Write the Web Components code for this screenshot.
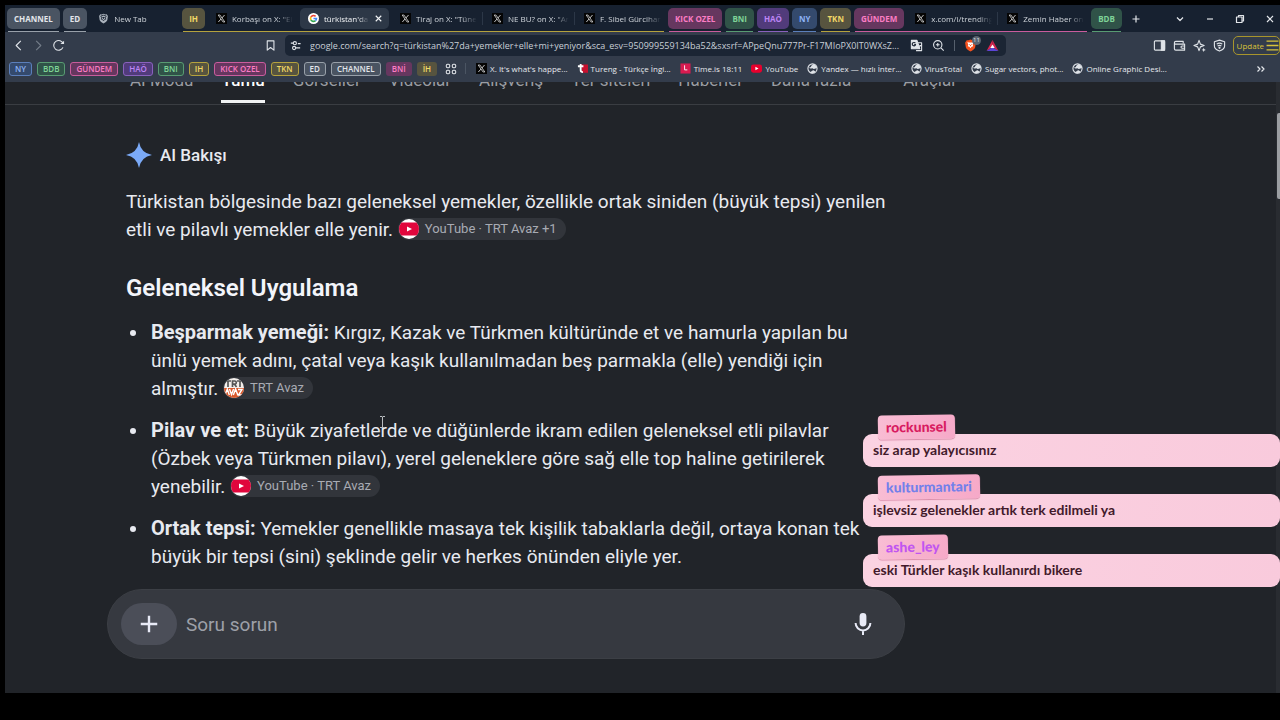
<!DOCTYPE html>
<html lang="tr">
<head>
<meta charset="utf-8">
<title>türkistan'da yemekler elle mi yeniyor</title>
<style>
  * { box-sizing: border-box; }
  body {
    margin: 0;
    padding: 5px 0 27px 5px;
    height: 100vh;
    background: #000;
    overflow: hidden;
    position: relative;
    font-family: "Open Sans", "Noto Sans", sans-serif;
    color: #e3e6ea;
  }
</style>
</head>
<body>
<browser-window>
  <tab-strip slot="tabs">
    <tab-group label="CHANNEL" color="grey"></tab-group>
    <tab-group label="ED" color="grey"></tab-group>
    <browser-tab icon="brave" label="New Tab"></browser-tab>
    <tab-group label="IH" color="yellow">
      <browser-tab icon="x" label='Korbaşı on X: "Eli'></browser-tab>
      <browser-tab icon="google" label="türkistan'da" active></browser-tab>
      <browser-tab icon="x" label='Tiraj on X: "Tünel' divider></browser-tab>
      <browser-tab icon="x" label='NE BU? on X: "Ar' divider></browser-tab>
      <browser-tab icon="x" label="F. Sibel Gürcihan"></browser-tab>
    </tab-group>
    <tab-group label="KICK OZEL" color="pink"></tab-group>
    <tab-group label="BNI" color="green"></tab-group>
    <tab-group label="HAÖ" color="purple"></tab-group>
    <tab-group label="NY" color="blue"></tab-group>
    <tab-group label="TKN" color="yellow"></tab-group>
    <tab-group label="GÜNDEM" color="pink">
      <browser-tab icon="x" label="x.com/i/trending" divider></browser-tab>
      <browser-tab icon="x" label="Zemin Haber on"></browser-tab>
    </tab-group>
    <tab-group label="BDB" color="green"></tab-group>
  </tab-strip>

  <address-bar slot="address" url="google.com/search?q=türkistan%27da+yemekler+elle+mi+yeniyor&amp;sca_esv=950999559134ba52&amp;sxsrf=APpeQnu777Pr-F17MIoPX0IT0WXsZ..."></address-bar>

  <bookmark-bar slot="bookmarks">
    <bookmark-chip color="blue">NY</bookmark-chip>
    <bookmark-chip color="green">BDB</bookmark-chip>
    <bookmark-chip color="pink">GÜNDEM</bookmark-chip>
    <bookmark-chip color="purple">HAÖ</bookmark-chip>
    <bookmark-chip color="green">BNI</bookmark-chip>
    <bookmark-chip color="yellow">IH</bookmark-chip>
    <bookmark-chip color="pink">KICK OZEL</bookmark-chip>
    <bookmark-chip color="yellow">TKN</bookmark-chip>
    <bookmark-chip color="grey">ED</bookmark-chip>
    <bookmark-chip color="grey">CHANNEL</bookmark-chip>
    <bookmark-chip color="pink" plain>BNİ</bookmark-chip>
    <bookmark-chip color="yellow" plain>İH</bookmark-chip>
    <bookmark-link slot="links" icon="x">X. It's what's happe...</bookmark-link>
    <bookmark-link slot="links" icon="tureng">Tureng - Türkçe İngi...</bookmark-link>
    <bookmark-link slot="links" icon="timeis">Time.is 18:11</bookmark-link>
    <bookmark-link slot="links" icon="youtube">YouTube</bookmark-link>
    <bookmark-link slot="links" icon="globe">Yandex — hızlı İnter...</bookmark-link>
    <bookmark-link slot="links" icon="globe">VirusTotal</bookmark-link>
    <bookmark-link slot="links" icon="globe">Sugar vectors, phot...</bookmark-link>
    <bookmark-link slot="links" icon="globe">Online Graphic Desi...</bookmark-link>
  </bookmark-bar>

  <search-page>
    <search-nav slot="nav"></search-nav>
    <ai-overview>
      <span slot="title">AI Bakışı</span>
      <p slot="summary">Türkistan bölgesinde bazı geleneksel yemekler, özellikle ortak siniden (büyük tepsi) yenilen<br>etli ve pilavlı yemekler elle yenir. <source-chip icon="ytround">YouTube · TRT Avaz +1</source-chip></p>
      <span slot="heading">Geleneksel Uygulama</span>
      <overview-item label="Beşparmak yemeği:">Kırgız, Kazak ve Türkmen kültüründe et ve hamurla yapılan bu<br>ünlü yemek adını, çatal veya kaşık kullanılmadan beş parmakla (elle) yendiği için<br>almıştır. <source-chip icon="trt">TRT Avaz</source-chip></overview-item>
      <overview-item label="Pilav ve et:">Büyük ziyafetlerde ve düğünlerde ikram edilen geleneksel etli pilavlar<br>(Özbek veya Türkmen pilavı), yerel geleneklere göre sağ elle top haline getirilerek<br>yenebilir. <source-chip icon="ytround">YouTube · TRT Avaz</source-chip></overview-item>
      <overview-item label="Ortak tepsi:">Yemekler genellikle masaya tek kişilik tabaklarla değil, ortaya konan tek<br>büyük bir tepsi (sini) şeklinde gelir ve herkes önünden eliyle yer.</overview-item>
    </ai-overview>
    <ask-bar placeholder="Soru sorun"></ask-bar>
  </search-page>
</browser-window>

<chat-overlay>
  <chat-message user="rockunsel" color="#d81b60">siz arap yalayıcısınız</chat-message>
  <chat-message user="kulturmantari" color="#7280ea">işlevsiz gelenekler artık terk edilmeli ya</chat-message>
  <chat-message user="ashe_ley" color="#c155f0">eski Türkler kaşık kullanırdı bikere</chat-message>
</chat-overlay>
<text-cursor></text-cursor>

<script>
"use strict";

(() => {
  // [viewBox, markup]; line icons take their stroke from currentColor
  const ICONS = {
    x: ["0 0 12 12", `<rect width="12" height="12" fill="#050505"/><path d="M2.4 2.2h1.9l5.3 7.6H7.7z" fill="none" stroke="#eee" stroke-width=".8"/><path d="M9.3 2.2 6.5 5.4M5.4 6.6 2.6 9.8" stroke="#eee" stroke-width=".9"/>`],
    google: ["0 0 24 24", `<circle cx="12" cy="12" r="12" fill="#fff"/><g fill="none" stroke-width="3.6"><path d="M16.6 7.4A6.5 6.5 0 0 0 6.3 9" stroke="#ea4335"/><path d="M6.3 9a6.5 6.5 0 0 0 0 6" stroke="#fbbc05"/><path d="M6.3 15a6.5 6.5 0 0 0 10 1.8" stroke="#34a853"/><path d="M16.3 16.8A6.5 6.5 0 0 0 18.5 12H12" stroke="#4285f4"/></g>`],
    brave: ["0 0 24 24", `<path d="M12 1.5 16 3l3-.2 2.6 4-1.2 8.7c-.8 3-5 5.500-8.400 7.500-3.400-2-7.600-4.500-8.400-7.500L2.400 6.800 5 2.800 8 3z" fill="#aab2bc"/><path d="M6 6.500 12 5l6 1.500-2 4 1 3-3 1-2 2.500-2-2.500-3-1 1-3z" fill="none" stroke="#182231" stroke-width="1.800"/><path d="M9 8.500h6l-3 5z" fill="#182231"/>`],
    braveColor: ["0 0 24 24", `<path d="M12 1 16 2.500h3l3 4.500-1.500 8.500c-1 3-5 5.500-8.500 7.500-3.500-2-7.500-4.500-8.500-7.500L2 7l3-4.500h3z" fill="#f4511e"/><path d="m6 6 4 .5h4l4-.5-2 4 1 3.500-3 1-2 2.500-2-2.500-3-1L8 10z" fill="#fff"/><path d="M9.500 9h1.500v2h2V9h1.500l-2.500 5z" fill="#f4511e"/>`],
    bat: ["0 0 24 24", `<path d="M12 2 1 22l11-7z" fill="#e0264f"/><path d="M12 2l11 20-11-7z" fill="#d0224f"/><path d="M1 22h22l-11-7z" fill="#5a45d6"/><path d="m12 10 4 6.500H8z" fill="#fff"/>`],
    globe: ["0 0 24 24", `<circle cx="12" cy="12" r="10" fill="none" stroke="#dfe3e8" stroke-width="2.400"/><path d="M3 10c4 0 6-1 6-3s3-2 5-5c5 1 8 6 8 9-3 0-4 2-7 2s-3-2-5-1-4-1-7-2zM7 21c1-3 3-2 4-3s1-2 3-2 2 2 4 2l-2 3-5 2z" fill="#dfe3e8"/>`],
    tureng: ["0 0 24 24", `<path d="M9 3h15v18H11z" fill="#c8102e"/><path d="M2 7h12M8 2v14q0 4 5 4" fill="none" stroke="#fff" stroke-width="4"/>`],
    timeis: ["0 0 24 24", `<rect x="1" y="1" width="22" height="22" fill="#d81b50"/><path d="M10 5v10h6" fill="none" stroke="#fff" stroke-width="2"/>`],
    youtube: ["0 0 24 24", `<rect y="3" width="24" height="18" rx="5" fill="#e8002d"/><path d="m9.500 8 7 4-7 4z" fill="#fff"/>`],
    ytround: ["0 0 20 20", `<circle cx="10" cy="10" r="10" fill="#fff"/><path d="M2.500 3.400h15a10 10 0 0 1 0 13.200h-15a10 10 0 0 1 0-13.200z" fill="#e0063c"/><path d="m8 7.400 5 2.600-5 2.600z" fill="#fff"/>`],
    trt: ["0 0 20 20", `<defs><clipPath id="c"><circle cx="10" cy="10" r="10"/></clipPath></defs><g clip-path="url(#c)"><rect width="20" height="20" fill="#f3efec"/><rect y="10" width="20" height="10" fill="#d9592c"/><path d="M1 3h6M4 3v6M8.500 9V3h2.200a1.600 1.600 0 0 1 0 3.200H9M10.600 6.200 12.500 9M13 3h6M16 3v6" fill="none" stroke="#555" stroke-width="1.700"/><path d="m1 17 2.300-6 2 6M5.500 11l2 5.500L9.600 11M9.300 17l2.300-6 2.200 6M14 11.500h4L14.500 17H19" fill="none" stroke="#fff" stroke-width="1.400"/></g>`],
    back: ["0 0 12 14", `<path d="M8.500 2 3.500 7l5 5"/>`],
    forward: ["0 0 12 14", `<path d="m3.500 2 5 5-5 5"/>`],
    reload: ["0 0 14 14", `<path d="M11.800 9A5.200 5.200 0 1 1 12 5.300"/><path d="M9 5.500h4V2z" fill="currentColor" stroke="none"/>`],
    bookmark: ["0 0 12 14", `<path d="M2.500 2h7.200v10L6 9.200 2.500 12z"/>`],
    tune: ["0 0 14 14", `<path d="M2 4.500h2.500M7.500 9.500H12M9.500 5h3"/><circle cx="6.300" cy="4.500" r="1.700"/><circle cx="5.500" cy="9.700" r="1.700"/>`],
    translate: ["0 0 14 14", `<path d="M1.500 1.500h6l3 9h-9z" fill="currentColor"/><path d="M8.500 4h4v8.500H6.500M10 7h2M8.500 10.500 11.500 7"/><path d="M5.800 4.600A1.800 1.800 0 1 0 6 6H4.500" stroke="#1b2534"/>`],
    zoomin: ["0 0 14 14", `<circle cx="6.200" cy="6.200" r="4.500"/><path d="m9.600 9.600 3 3M4.200 6.200h4M6.200 4.200v4"/>`],
    sidebar: ["0 0 14 14", `<rect x="1.500" y="2" width="11" height="10" rx="1"/><path d="M9 2h3.500v10H9z" fill="currentColor"/>`],
    wallet: ["0 0 14 14", `<path d="M11 4.500V2.500H3a1.500 1.500 0 0 0 0 3h9.500V12H3a1.500 1.500 0 0 1-1.500-1.500V4M12.500 7.500H9.800a1.200 1.200 0 0 0 0 2.400h2.700"/>`],
    sparkle: ["0 0 14 14", `<path d="M6.500 1.500 8 5.500l4 1.500-4 1.500-1.500 4L5 8.500 1 7l4-1.500z"/><path d="m11.500 9.500.7 1.600 1.600.7-1.600.7-.7 1.500-.7-1.500-1.500-.7 1.500-.7z" fill="currentColor" stroke="none"/>`],
    shield: ["0 0 14 14", `<path d="M7 1.200 12.500 3v4.500c0 2.500-3 4.500-5.500 5.500-2.500-1-5.500-3-5.500-5.500V3z"/><path d="M4 5.500q3-2 6 0M5 7.600q2-1.400 4 0"/><circle cx="7" cy="9.500" r=".6"/>`],
    menu: ["0 0 12 12", `<path d="M.5 2h11M.5 6h11M.5 10h11"/>`],
    apps: ["0 0 14 14", `<rect x="1.500" y="1.500" width="4" height="4" rx="1.500"/><rect x="8.500" y="1.500" width="4" height="4" rx="1.500"/><rect x="1.500" y="8.500" width="4" height="4" rx="1.500"/><rect x="8.500" y="8.500" width="4" height="4" rx="1.500"/>`],
    more: ["0 0 12 12", `<path d="m2.500 3.500 2.500 2.500-2.500 2.500m4-5L9 6 6.500 8.500"/>`],
    plus: ["0 0 12 12", `<path d="M6 2.500v7M2.500 6h7"/>`],
    chevron: ["0 0 12 12", `<path d="m3 4.500 3 3L9 4.500"/>`],
    minimize: ["0 0 12 12", `<path d="M3 6h6"/>`],
    restore: ["0 0 12 12", `<path d="M2.500 4h5.500v5.500H2.500zM4.500 4V2.500h5V8H8"/>`],
    close: ["0 0 12 12", `<path d="m3 3 6 6m0-6-6 6"/>`],
    star: ["0 0 24 24", `<path d="M12 0q1.800 10.200 12 12-10.200 1.800-12 12-1.800-10.200-12-12Q10.200 10.200 12 0z" fill="#7baaf7" stroke="none"/>`],
    bigplus: ["0 0 24 24", `<path d="M12 3v18M3 12h18" stroke-width="2.600"/>`],
    mic: ["0 0 24 24", `<rect x="8.600" y="1" width="6.800" height="13.500" rx="3.400" fill="currentColor" stroke="none"/><path d="M4.600 11a7.400 7.400 0 0 0 14.800 0M12 18.500V23" stroke-width="2"/>`]
  };

  const FILLED = ["x", "google", "brave", "braveColor", "bat", "globe", "tureng", "timeis", "youtube", "ytround", "trt"];

  const PALETTE = `
    :host([color="grey"]) { --bg: #4a5462; --fg: #e2e5ea; --line: #98a0a9; }
    :host([color="yellow"]) { --bg: #57543f; --fg: #f0d766; --line: #b5a23d; }
    :host([color="pink"]) { --bg: #66375f; --fg: #fb7cc4; --line: #c95c9d; }
    :host([color="green"]) { --bg: #305348; --fg: #7fd397; --line: #589b72; }
    :host([color="purple"]) { --bg: #513b7b; --fg: #bd85f5; --line: #8961bd; }
    :host([color="blue"]) { --bg: #344a6d; --fg: #8cb2f5; --line: #5b7fbb; }
  `;

  const RESET = `
    * { box-sizing: border-box; }
    button {
      font: inherit;
      color: inherit;
      background: none;
      border: 0;
      padding: 0;
      margin: 0;
    }
    a { color: inherit; text-decoration: none; }
  `;

  class BaseElement extends HTMLElement {
    connectedCallback() {
      if (this.shadowRoot) {
        return;
      }

      this.attachShadow({mode: "open"}).innerHTML = `<style>${RESET}${this.styles}</style>${this.markup}`;
    }

    attr(name) {
      return this.getAttribute(name) || "";
    }

    get styles() {
      return "";
    }

    get markup() {
      return "<slot></slot>";
    }
  }

  customElements.define("ui-icon", class extends BaseElement {
    get styles() {
      return `
        :host { display: inline-flex; flex: none; width: var(--size, 12px); height: var(--size, 12px); }
        svg { width: 100%; height: 100%; }
        svg.line { fill: none; stroke: currentColor; stroke-width: 1.2; stroke-linejoin: round; }
      `;
    }

    get markup() {
      const name = this.attr("name");
      const [box, body] = ICONS[name];
      return `<svg class="${FILLED.includes(name) ? "" : "line"}" viewBox="${box}" aria-hidden="true">${body}</svg>`;
    }
  });

  customElements.define("browser-window", class extends BaseElement {
    get styles() {
      return `
        :host { display: flex; flex-direction: column; height: 100%; background: #212429; overflow: hidden; }
        .toolbar { background: #333c4b; flex: none; padding-bottom: 4px; position: relative; }
        .page { flex: 1; min-height: 0; display: flex; }
      `;
    }

    get markup() {
      return `
        <slot name="tabs"></slot>
        <div class="toolbar"><slot name="address"></slot><slot name="bookmarks"></slot></div>
        <div class="page"><slot></slot></div>
      `;
    }
  });

  customElements.define("tab-strip", class extends BaseElement {
    get styles() {
      return `
        :host { display: flex; gap: 3px; flex: none; height: 27px; padding: 3px 4px 0 2px; background: #172130; }
        .new { margin-left: 5px; }
        .window { margin-left: auto; display: flex; gap: 18px; height: 21px; align-items: center; }
        .window button, .new { width: 12px; height: 21px; display: flex; align-items: center; }
      `;
    }

    get markup() {
      return `
        <slot></slot>
        <button class="new" aria-label="New tab"><ui-icon name="plus"></ui-icon></button>
        <div class="window">
          <button aria-label="Search tabs"><ui-icon name="chevron"></ui-icon></button>
          <button aria-label="Minimize"><ui-icon name="minimize"></ui-icon></button>
          <button aria-label="Restore"><ui-icon name="restore"></ui-icon></button>
          <button aria-label="Close"><ui-icon name="close"></ui-icon></button>
        </div>
      `;
    }
  });

  customElements.define("tab-group", class extends BaseElement {
    get styles() {
      return PALETTE + `
        :host { display: flex; flex-direction: column; gap: 2px; min-width: 0; flex: none; }
        .row { display: flex; gap: 3px; height: 21px; }
        .chip {
          padding: 0 7px;
          border-radius: 5px;
          background: var(--bg);
          color: var(--fg);
          font-size: 8px;
          font-weight: 700;
          white-space: nowrap;
        }
        .line { height: 1px; margin: 0 1px; background: var(--line); }
      `;
    }

    get markup() {
      return `
        <div class="row"><button class="chip">${this.attr("label")}</button><slot></slot></div>
        <div class="line"></div>
      `;
    }
  });

  customElements.define("browser-tab", class extends BaseElement {
    get styles() {
      return `
        :host { display: flex; width: 89px; height: 21px; font-size: 8px; color: #cfd4da; position: relative; }
        :host([active]) { background: #2d3847; border-radius: 5px; color: #f2f4f6; }
        .tab { flex: 1; min-width: 0; display: flex; align-items: center; gap: 5px; padding: 0 4px 0 8px; }
        .label {
          flex: 1;
          text-align: left;
          overflow: hidden;
          white-space: nowrap;
          mask-image: linear-gradient(90deg, #000 75%, transparent);
        }
        .close { width: 12px; margin-right: 4px; display: flex; align-items: center; --size: 11px; }
        :host([divider])::after { content: ""; position: absolute; right: -2px; top: 4px; height: 13px; width: 1px; background: #2c3747; }
      `;
    }

    get markup() {
      const close = this.hasAttribute("active")
        ? `<button class="close" aria-label="Close tab"><ui-icon name="close"></ui-icon></button>` : "";
      return `
        <button class="tab" style="--size: 11px"><ui-icon name="${this.attr("icon")}"></ui-icon><span class="label">${this.attr("label")}</span></button>
        ${close}
      `;
    }
  });

  customElements.define("address-bar", class extends BaseElement {
    get styles() {
      return `
        :host {
          display: grid;
          grid-template-columns: 280px 1fr 274px;
          align-items: center;
          height: 27px;
          color: #dfe3e8;
          --size: 13px;
        }
        button { display: flex; align-items: center; }
        .left { display: flex; gap: 7px; padding: 0 8px 0 7px; }
        .left .forward { color: #747d89; }
        .left .save { margin-left: auto; }
        .url {
          display: flex;
          align-items: center;
          height: 21px;
          padding: 0 7px 0 4px;
          border-radius: 5px;
          background: #1b2534;
        }
        input {
          flex: 1;
          min-width: 0;
          margin: 0 10px 0 8px;
          padding: 0;
          border: 0;
          outline: 0;
          background: none;
          font: 9px "Open Sans", "Noto Sans", sans-serif;
          color: #c9cfd7;
        }
        .actions { display: flex; align-items: center; gap: 9px; }
        .actions i { width: 1px; height: 11px; background: #56606d; }
        .shields { position: relative; }
        .shields span {
          position: absolute;
          top: -3px;
          right: -4px;
          width: 9px;
          height: 9px;
          border-radius: 50%;
          background: #5b6470;
          font-size: 6px;
          line-height: 9px;
          text-align: center;
        }
        .right { display: flex; justify-content: flex-end; align-items: center; gap: 7px; }
        .update {
          gap: 2px;
          height: 19px;
          padding: 0 0 0 3px;
          border: 1px solid #a8952c;
          border-radius: 5px;
          color: #d9c23a;
          font-size: 8px;
        }
      `;
    }

    get markup() {
      return `
        <div class="left">
          <button aria-label="Back"><ui-icon name="back"></ui-icon></button>
          <button class="forward" aria-label="Forward"><ui-icon name="forward"></ui-icon></button>
          <button aria-label="Reload"><ui-icon name="reload"></ui-icon></button>
          <button class="save" aria-label="Bookmark"><ui-icon name="bookmark"></ui-icon></button>
        </div>
        <div class="url">
          <button aria-label="Site settings"><ui-icon name="tune"></ui-icon></button>
          <input type="text" aria-label="Address" value="${this.attr("url").replace(/&/g, "&amp;")}">
          <div class="actions">
            <button aria-label="Translate"><ui-icon name="translate"></ui-icon></button>
            <button aria-label="Zoom"><ui-icon name="zoomin"></ui-icon></button>
            <i></i>
            <button class="shields" aria-label="Shields"><ui-icon name="braveColor"></ui-icon><span>11</span></button>
            <button aria-label="Rewards"><ui-icon name="bat"></ui-icon></button>
          </div>
        </div>
        <div class="right">
          <button aria-label="Sidebar"><ui-icon name="sidebar"></ui-icon></button>
          <button aria-label="Wallet"><ui-icon name="wallet"></ui-icon></button>
          <button aria-label="Leo"><ui-icon name="sparkle"></ui-icon></button>
          <button aria-label="VPN"><ui-icon name="shield"></ui-icon></button>
          <button class="update">Update<ui-icon name="menu"></ui-icon></button>
        </div>
      `;
    }
  });

  customElements.define("bookmark-bar", class extends BaseElement {
    get styles() {
      return `
        :host { display: flex; align-items: center; gap: 5px; height: 19px; padding: 0 13px 0 4px; color: #e6e9ed; --size: 12px; }
        .links { display: flex; gap: 9px; flex: 1; min-width: 0; }
        button { display: flex; }
        .apps { margin-left: 3px; }
        i { width: 1px; height: 11px; margin: 0 5px 0 3px; background: #4b5563; }
      `;
    }

    get markup() {
      return `
        <slot></slot>
        <button class="apps" aria-label="All groups"><ui-icon name="apps"></ui-icon></button>
        <i></i>
        <div class="links"><slot name="links"></slot></div>
        <button aria-label="More bookmarks"><ui-icon name="more"></ui-icon></button>
      `;
    }
  });

  customElements.define("bookmark-chip", class extends BaseElement {
    get styles() {
      return PALETTE + `
        :host { display: flex; flex: none; }
        button {
          height: 14px;
          padding: 0 5px;
          border: 1px solid var(--line);
          border-radius: 3px;
          background: var(--bg);
          color: var(--fg);
          font-size: 8px;
          font-weight: 600;
          line-height: 12px;
          white-space: nowrap;
        }
        :host([plain]) button { border-color: transparent; }
      `;
    }

    get markup() {
      return "<button><slot></slot></button>";
    }
  });

  customElements.define("bookmark-link", class extends BaseElement {
    get styles() {
      return `
        :host { display: flex; flex: none; --size: 11px; }
        a { display: flex; align-items: center; gap: 3px; font-size: 8px; font-weight: 500; white-space: nowrap; }
      `;
    }

    get markup() {
      return `<a href="#"><ui-icon name="${this.attr("icon")}"></ui-icon><slot></slot></a>`;
    }
  });

  customElements.define("search-page", class extends BaseElement {
    get styles() {
      return `
        :host { display: flex; flex: 1; min-width: 0; font-family: Roboto, "Noto Sans", sans-serif; color: #e8eaf0; }
        .content { flex: 1; min-width: 0; overflow: hidden; }
        .scrollbar { width: 4px; flex: none; padding: 31px 0 0 1px; background: #292c31; }
        .thumb { height: 86px; border-radius: 2px 0 0 2px; background: #9b9ea2; }
      `;
    }

    get markup() {
      return `
        <div class="content"><slot name="nav"></slot><slot></slot></div>
        <div class="scrollbar"><div class="thumb"></div></div>
      `;
    }
  });

  // Scrolled up under the toolbar, only the lower edge of the labels shows
  customElements.define("search-nav", class extends BaseElement {
    get styles() {
      return `
        :host {
          display: flex;
          gap: 28px;
          margin-top: -14px;
          padding: 0 125px 1px;
          border-bottom: 1px solid #3a3d42;
          font-size: 17px;
          line-height: 24px;
          color: #9a9da3;
          white-space: nowrap;
        }
        a { padding-bottom: 8px; border-bottom: 3px solid transparent; }
        a.current { color: #fff; border-color: #f1f3f4; font-weight: 500; }
        a.tools { margin-left: 24px; }
      `;
    }

    get markup() {
      return `
        <a href="#">AI Modu</a>
        <a href="#" class="current">Tümü</a>
        <a href="#">Görseller</a>
        <a href="#">Videolar</a>
        <a href="#">Alışveriş</a>
        <a href="#">Yer siteleri</a>
        <a href="#">Haberler</a>
        <a href="#">Daha fazla</a>
        <a href="#" class="tools">Araçlar</a>
      `;
    }
  });

  customElements.define("ai-overview", class extends BaseElement {
    get styles() {
      return `
        :host { display: block; padding: 38px 0 0 121px; font-size: 19px; line-height: 28px; white-space: nowrap; }
        header { display: flex; align-items: center; gap: 8px; height: 24px; margin-bottom: 21px; font-size: 17px; font-weight: 500; --size: 26px; }
        ::slotted(p) { margin: 0; }
        h2 { margin: 28px 0 15px; font-size: 24px; font-weight: 600; line-height: 32px; color: #f3f5fa; }
        ul { display: flex; flex-direction: column; gap: 14px; margin: 0; padding: 0; list-style: none; }
      `;
    }

    get markup() {
      return `
        <header><ui-icon name="star"></ui-icon><slot name="title"></slot></header>
        <slot name="summary"></slot>
        <h2><slot name="heading"></slot></h2>
        <ul><slot></slot></ul>
      `;
    }
  });

  customElements.define("overview-item", class extends BaseElement {
    get styles() {
      return `
        :host { display: flex; gap: 15px; padding-left: 4px; }
        .dot { flex: none; width: 6px; height: 6px; margin-top: 11px; border-radius: 50%; background: #e8eaf0; }
        strong { font-size: 20px; font-weight: 700; line-height: 20px; }
      `;
    }

    get markup() {
      return `<span class="dot"></span><div><strong>${this.attr("label")}</strong> <slot></slot></div>`;
    }
  });

  customElements.define("source-chip", class extends BaseElement {
    get styles() {
      return `
        :host { display: inline-flex; vertical-align: top; height: 26px; align-items: center; --size: 20px; }
        button {
          display: flex;
          align-items: center;
          gap: 6px;
          height: 22px;
          padding: 0 9px 0 1px;
          border-radius: 11px;
          background: #32353b;
          color: #a8abb3;
          font-size: 13px;
        }
      `;
    }

    get markup() {
      return `<button><ui-icon name="${this.attr("icon")}"></ui-icon><span><slot></slot></span></button>`;
    }
  });

  customElements.define("ask-bar", class extends BaseElement {
    get styles() {
      return `
        :host {
          display: flex;
          align-items: center;
          gap: 9px;
          max-width: 798px;
          height: 70px;
          margin: 18px 0 0 102px;
          padding: 0 29px 0 13px;
          border: 1px solid #3c3f45;
          border-radius: 35px;
          background: #363940;
          color: #e8eaf6;
          box-sizing: border-box;
        }
        .add { display: flex; align-items: center; justify-content: center; width: 56px; height: 42px; border-radius: 21px; background: #4b4e58; --size: 22px; }
        .mic { display: flex; --size: 24px; }
        input { flex: 1; min-width: 0; padding: 0; border: 0; outline: 0; background: none; font: 19px Roboto, "Noto Sans", sans-serif; color: #e8eaf0; }
        input::placeholder { color: #9da0a8; opacity: 1; }
      `;
    }

    get markup() {
      return `
        <button class="add" aria-label="Add"><ui-icon name="bigplus"></ui-icon></button>
        <input type="text" aria-label="${this.attr("placeholder")}" placeholder="${this.attr("placeholder")}">
        <button class="mic" aria-label="Voice"><ui-icon name="mic"></ui-icon></button>
      `;
    }
  });

  // Stream chat, floats above the browser window
  customElements.define("chat-overlay", class extends BaseElement {
    get styles() {
      return `
        :host { position: absolute; right: 0; bottom: 133px; width: 417px; display: flex; flex-direction: column; gap: 8px; }
      `;
    }
  });

  customElements.define("chat-message", class extends BaseElement {
    get styles() {
      return `
        :host { display: flex; flex-direction: column; align-items: flex-start; font-family: Lato, "Noto Sans", sans-serif; font-size: 14px; }
        .user {
          position: relative;
          margin: 0 0 -5px 15px;
          padding: 0 8px;
          border-radius: 4px;
          background: linear-gradient(100deg, #f9bdd4, #f6a9c8);
          box-shadow: 0 1px 1px #d98aa8;
          font-weight: 900;
          line-height: 24px;
          transform: rotate(-1deg);
        }
        .text {
          align-self: stretch;
          padding: 0 10px 2px;
          border-radius: 9px;
          background: linear-gradient(100deg, #fbd3e2, #f9cadc);
          color: #421a2b;
          font-weight: 700;
          line-height: 31px;
        }
      `;
    }

    get markup() {
      return `
        <div class="user" style="color: ${this.attr("color")}">${this.attr("user")}</div>
        <div class="text"><slot></slot></div>
      `;
    }
  });

  customElements.define("text-cursor", class extends BaseElement {
    get styles() {
      return `
        :host { position: absolute; left: 379px; top: 416px; width: 7px; height: 12px; }
        svg { display: block; }
      `;
    }

    get markup() {
      return `<svg width="7" height="12" fill="none" stroke="#b9bcc0"><path d="M1 .5h2l.5.5.5-.5h2M3.500 1v10M1 11.500h5"/></svg>`;
    }
  });
})();
</script>
</body>
</html>
